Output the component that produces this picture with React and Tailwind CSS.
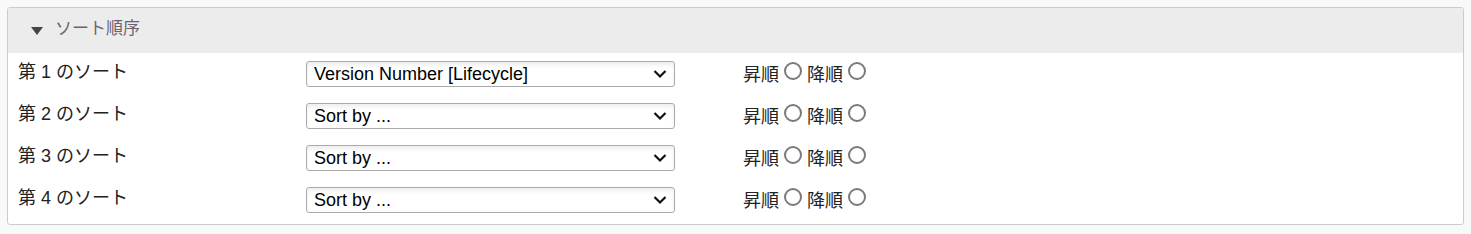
import React from 'react';

const rows = [
  { n: 1, value: 'Version Number [Lifecycle]' },
  { n: 2, value: 'Sort by ...' },
  { n: 3, value: 'Sort by ...' },
  { n: 4, value: 'Sort by ...' },
];

const font = { fontFamily: '"Liberation Sans", "Noto Sans CJK JP", sans-serif' };

const Radio = () => (
  <span className="block mt-[-2px] w-[18px] h-[18px] rounded-full border-2 border-[#7a7a7a] bg-white shrink-0" />
);

const SortRow = ({ n, value }) => (
  <div className="flex h-[42px] pt-[8px]">
    <div className="w-[298px] pl-[10px] text-[18px] leading-[22px] text-[#222]">
      第 {n} のソート
    </div>
    <div className="w-[437px]">
      <div className="relative w-[369px] h-[26px] border border-[#aaa] rounded-[3px] bg-white shadow-[inset_0_3px_4px_rgba(0,0,0,0.07)] flex items-center pl-[7px] text-[18px] text-black">
        <span>{value}</span>
        <svg className="absolute right-[7px] top-[7px]" width="14" height="10" viewBox="0 0 14 10">
          <path d="M1.5 2 L7 7.5 L12.5 2" fill="none" stroke="#111" strokeWidth="2.2" />
        </svg>
      </div>
    </div>
    <div className="flex items-start pt-[3px] text-[18px] leading-[22px] text-[#222]">
      <span>昇順</span>
      <span className="ml-[5px]"><Radio /></span>
      <span className="ml-[5px]">降順</span>
      <span className="ml-[5px]"><Radio /></span>
    </div>
  </div>
);

export default function App() {
  return (
    <div className="w-[1471px] h-[234px] bg-[#f9f9f9] p-[7px]" style={font}>
      <div className="border border-[#ccc] rounded-[3px] bg-white overflow-hidden">
        <div className="h-[45px] bg-[#ececec] flex items-center pl-[23px] pb-[3px]">
          <svg width="12" height="8" viewBox="0 0 12 8" className="mt-[4px]">
            <path d="M0 0 L12 0 L6 8 Z" fill="#444" />
          </svg>
          <span className="ml-[12px] text-[17px] text-[#6b6470]">ソート順序</span>
        </div>
        <div className="pb-[3px]">
          {rows.map((r) => (
            <SortRow key={r.n} n={r.n} value={r.value} />
          ))}
        </div>
      </div>
    </div>
  );
}
